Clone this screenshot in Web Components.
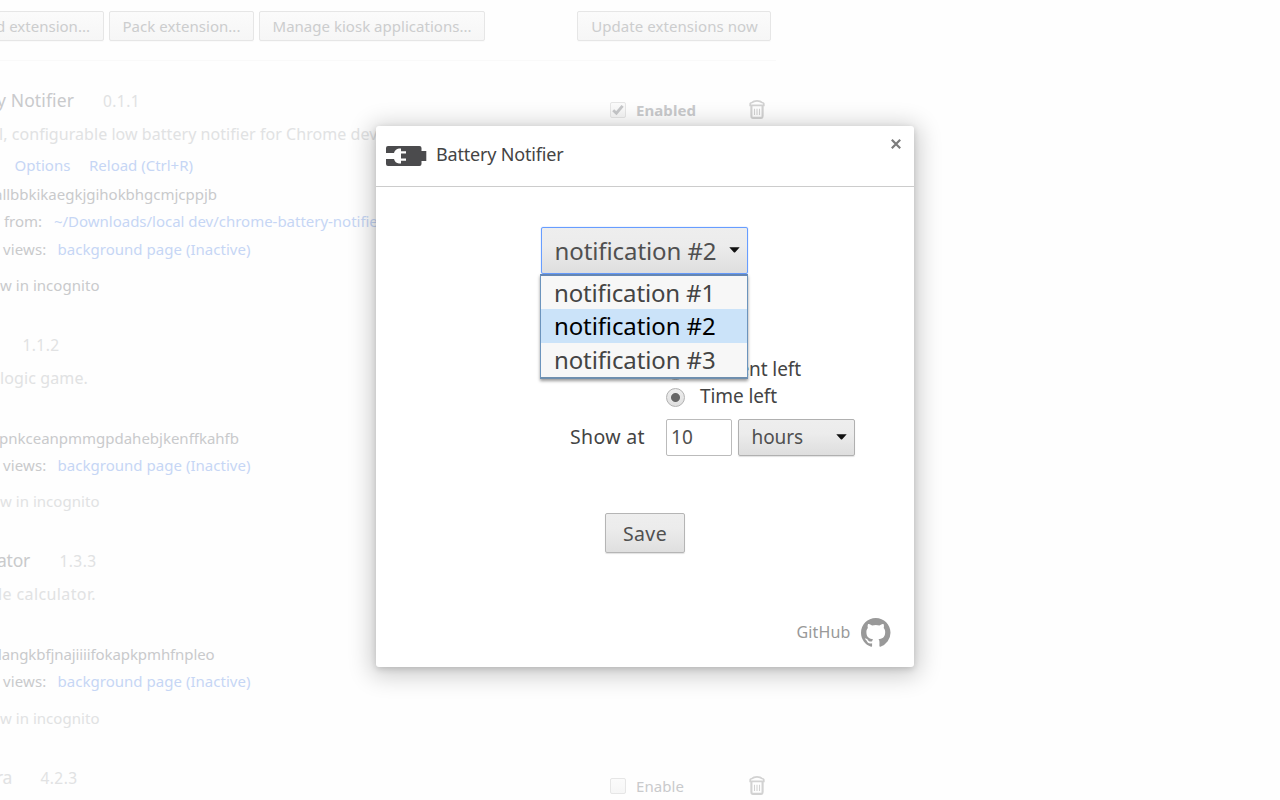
<!DOCTYPE html>
<html lang="en">
<head>
<meta charset="utf-8">
<title>Battery Notifier</title>
<style>
html,body{margin:0;width:1280px;height:800px;overflow:hidden;background:#fefefe;font-family:"Noto Sans","Open Sans",sans-serif}
</style>
</head>
<body>
<extensions-page></extensions-page>
<options-dialog></options-dialog>
<script>
const define = (name, html, setup) => customElements.define(name, class extends HTMLElement {
  connectedCallback() {
    if (this.shadowRoot) return;
    const t = document.createElement('template');
    t.innerHTML = html;
    this.attachShadow({mode: 'open'}).append(t.content.cloneNode(true));
    if (setup) setup(this);
  }
});

/* A single run of text, tracked so that it fills the width in its w attribute. */
define('fit-text', `<style>
:host{display:block;flex:none;white-space:nowrap;line-height:26px;font-size:15px}
span{display:inline-block}
</style><span><slot></slot></span>`, el => {
  const s = el.getAttribute('s'), x = el.getAttribute('x');
  if (s) el.style.fontSize = s + 'px';
  if (x) el.style.marginLeft = x + 'px';
  const w = +el.getAttribute('w');
  if (w) {
    const span = el.shadowRoot.querySelector('span');
    const n = el.textContent.length;
    el.style.letterSpacing = ((w - span.getBoundingClientRect().width) / n).toFixed(3) + 'px';
    el.style.width = w + 'px';
  }
});

define('text-row', `<style>
:host{display:flex;align-items:baseline;height:26px;line-height:26px;color:#c9cacc}
:host::before{content:"\\200b";font-size:17px;width:0;flex:none}
</style><slot></slot>`, el => { el.style.marginTop = (el.getAttribute('gap') || 0) + 'px'; });

define('tool-button', `<style>
:host{display:flex;box-sizing:border-box;justify-content:center;align-items:center;height:30px;border:1px solid #e6e6e6;border-radius:2px;background:linear-gradient(#fbfbfb,#f6f6f6);color:#cccdce;box-shadow:0 1px 0 #fafafa;flex:none}
</style><slot></slot>`);

define('check-box', `<style>
:host{display:block;width:14px;height:14px;border:1px solid #e6e6e6;border-radius:2px;background:linear-gradient(#fbfbfb,#f6f6f6);flex:none}
svg{display:none;width:14px;height:14px}
:host([checked]) svg{display:block}
</style><svg viewBox="0 0 14 14"><path d="M2.2 7.2 5.4 10.2 11.6 2.9" fill="none" stroke="#c6c7c9" stroke-width="2.9"/></svg>`);

define('trash-icon', `<style>:host{display:block;width:16px;height:19px;flex:none}svg{display:block}</style>
<svg width="16" height="19" viewBox="0 0 16 19" fill="none" stroke="#d2d2d2"><path d="M1.2 5.4V3.6Q1.2 2.8 3 2.5L5 1.4Q8 .5 11 1.4L13 2.5Q14.8 2.8 14.8 3.6V5.4Z" stroke-width="1.7"/><path d="M2.4 6V16Q2.4 17.9 4 17.9H12Q13.6 17.9 13.6 16V6" stroke-width="2.1"/><path d="M5.5 8.8V15M8 8.8V15M10.5 8.8V15" stroke-width="1.1"/></svg>`);

define('extension-item', `<style>
:host{display:flex;align-items:flex-start}
main{width:610px;flex:none}
aside{display:flex;align-items:center;padding-top:10px;color:#c9cacc}
</style><main><slot></slot></main><aside><slot name="controls"></slot></aside>`, el => {
  el.style.height = el.getAttribute('h') + 'px';
});

define('extensions-page', `<style>
:host{display:block;width:1280px;height:800px;overflow:hidden}
nav{display:flex;width:776px;height:61px;margin-bottom:-1px;box-sizing:border-box;border-bottom:1px solid #f9f9f9;padding-top:11px}
.l{color:#c6d6f5}.v{color:#e1e2e3}
.ctl{display:flex;align-items:center;height:26px}
trash-icon{margin-top:-2px}
</style>
<nav>
<tool-button style="width:106px;margin-left:-2px;justify-content:flex-start"><fit-text x="-3" w="94">d extension...</fit-text></tool-button>
<tool-button style="width:145px;margin-left:5px"><fit-text w="118">Pack extension...</fit-text></tool-button>
<tool-button style="width:226px;margin-left:5px"><fit-text w="199">Manage kiosk applications...</fit-text></tool-button>
<tool-button style="width:194px;margin-left:92px"><fit-text x="1" w="166.5">Update extensions now</fit-text></tool-button>
</nav>
<extension-item h="244">
 <text-row gap="27"><fit-text s="17.5" x="-3" w="77">y Notifier</fit-text><fit-text class="v" s="15.5" x="29" w="37">0.1.1</fit-text></text-row>
 <text-row gap="8"><fit-text class="v" s="16" x="-1" w="411.5">l, configurable low battery notifier for Chrome devices.</fit-text></text-row>
 <text-row gap="5"><fit-text class="l" x="14.5" w="56">Options</fit-text><fit-text class="l" x="18.5" w="104">Reload (Ctrl+R)</fit-text></text-row>
 <text-row gap="3"><fit-text x="-6" w="223">allbbkikaegkjgihokbhgcmjcppjb</fit-text></text-row>
 <text-row gap="1"><fit-text x="4" w="38">from:</fit-text><fit-text class="l" x="12" w="330">~/Downloads/local dev/chrome-battery-notifier</fit-text></text-row>
 <text-row gap="2"><fit-text x="3" w="43.5">views:</fit-text><fit-text class="l" x="11" w="193">background page (Inactive)</fit-text></text-row>
 <text-row gap="10"><fit-text x="0" w="99.5">w in incognito</fit-text></text-row>
 <div slot="controls" class="ctl" style="margin-top:27px"><check-box checked></check-box><fit-text x="10" w="60" style="font-weight:bold">Enabled</fit-text><trash-icon style="margin-left:53px"></trash-icon></div>
</extension-item>
<extension-item h="216">
 <text-row gap="28"><fit-text class="v" s="15.5" x="22.5" w="37">1.1.2</fit-text></text-row>
 <text-row gap="7"><fit-text class="v" s="16" x="0" w="88">logic game.</fit-text></text-row>
 <text-row gap="34"><fit-text x="-1" w="240">pnkceanpmmgpdahebjkenffkahfb</fit-text></text-row>
 <text-row gap="1"><fit-text x="3" w="43.5">views:</fit-text><fit-text class="l" x="11" w="193">background page (Inactive)</fit-text></text-row>
 <text-row gap="10"><fit-text class="v" x="0" w="99.5">w in incognito</fit-text></text-row>
</extension-item>
<extension-item h="217">
 <text-row gap="27"><fit-text s="17.5" x="-3" w="33">ator</fit-text><fit-text class="v" s="15.5" x="29.5" w="37">1.3.3</fit-text></text-row>
 <text-row gap="8"><fit-text class="v" s="16" x="-2" w="98">le calculator.</fit-text></text-row>
 <text-row gap="34"><fit-text x="-2" w="216.5">langkbfjnajiiiifokapkpmhfnpleo</fit-text></text-row>
 <text-row gap="1"><fit-text x="3" w="43.5">views:</fit-text><fit-text class="l" x="11" w="193">background page (Inactive)</fit-text></text-row>
 <text-row gap="11"><fit-text class="v" x="0" w="99.5">w in incognito</fit-text></text-row>
</extension-item>
<extension-item h="63">
 <text-row gap="27"><fit-text class="v" s="17.5" x="-4" w="16">ra</fit-text><fit-text class="v" s="15.5" x="28.5" w="37">4.2.3</fit-text></text-row>
 <div slot="controls" class="ctl" style="margin-top:26px"><check-box></check-box><fit-text x="10" w="48">Enable</fit-text><trash-icon style="margin-left:65px"></trash-icon></div>
</extension-item>`);

define('drop-button', `<style>
:host{display:flex;align-items:center;box-sizing:border-box;border:1px solid #b0b0b0;border-radius:2px;background:linear-gradient(#eee,#ececec 38%,#dedede);box-shadow:0 1px 1px rgba(0,0,0,.12);color:#505050;padding:0 7px 0 12.5px;justify-content:space-between}
:host([focused]){border-color:#679dff;box-shadow:0 0 1px #679dff}
svg{display:block;flex:none;margin-top:-1px}
</style><slot></slot><svg width="11" height="6" viewBox="0 0 11 6"><path d="M.3.3H10.7L6.2 5.2Q5.5 6 4.8 5.2Z" fill="#111"/></svg>`);

define('option-menu', `<style>
:host{display:block;position:absolute;z-index:2;box-sizing:border-box;width:208px;height:105px;left:-1px;top:47px;background:#f7f7f7;border:1px solid #6c94bd;border-top:2px solid #6586b3;border-bottom:2px solid #6f8fae;box-shadow:0 2px 3px rgba(0,0,0,.4);color:#444}
div{height:34px;padding-left:13px;display:flex;align-items:center}
style+div{height:33px}
.on{background:#cbe3f9;color:#000}
</style><div><fit-text s="24" w="161">notification #1</fit-text></div><div class="on"><fit-text s="24" w="161.5">notification #2</fit-text></div><div><fit-text s="24" w="161.5">notification #3</fit-text></div>`);

define('radio-dot', `<style>
:host{display:block;box-sizing:border-box;width:19px;height:19px;border-radius:50%;border:1px solid #b2b2b2;background:radial-gradient(circle,#666 0 4px,transparent 5px),linear-gradient(#eee,#dfdfdf);flex:none;margin-top:2px}
:host([off]){background:linear-gradient(#eee,#dfdfdf)}
</style>`);

define('options-dialog', `<style>
:host{display:block;position:absolute;left:376px;top:126px;width:538px;height:541px;background:#fff;border-radius:3px;box-shadow:0 4px 23px 5px rgba(0,0,0,.2),0 2px 6px rgba(0,0,0,.15);color:#444}
header{display:flex;height:60px;border-bottom:1px solid #ccc;padding-left:10px}
header svg,footer svg{display:block;flex:none}
.batt{margin-top:20px}
.x{margin:12.5px 13px 0 auto}
.pick{position:relative;width:207px;height:47px;margin:40px 0 0 165px}
.pick drop-button{height:47px}
.row{display:flex;align-items:center;height:27px;padding-left:290px}
.row fit-text{margin:-1px 0 0 15px}
.at{display:flex;align-items:center;height:37px;margin-top:9px;padding-left:194px}
.at fit-text{margin-top:-2px}
.num{box-sizing:border-box;width:66px;height:37px;border:1px solid #bbb;border-radius:2px;margin-left:21px;padding-left:4px;display:flex;align-items:center;color:#505050}
.save{display:flex;align-items:center;justify-content:center;box-sizing:border-box;width:80px;height:40px;margin:57px 0 0 229px;border:1px solid #b5b5b5;border-radius:2px;background:linear-gradient(#eee,#ececec 38%,#dfdfdf);box-shadow:0 1px 1px rgba(0,0,0,.12);color:#505050;padding-top:1px}
footer{display:flex;align-items:center;height:30px;margin-top:65px;padding-left:420.5px;color:#999}
</style>
<header>
<svg class="batt" width="41" height="20" viewBox="0 0 41 20"><path d="M2 0H33.5Q35.5 0 35.5 2V5H40.3V15H35.5V18Q35.5 20 33.5 20H2Q0 20 0 18V13H8Q9 17 13 17.5H15V14.8H20V12.4H15V7.6H20V5.2H15V2.5H13Q9 3 8 7H0V2Q0 0 2 0Z" fill="#4b4b4d"/></svg>
<fit-text s="18" x="9" w="127.5" style="margin-top:15px">Battery Notifier</fit-text>
<svg class="x" width="10" height="10" viewBox="0 0 10 10"><path d="M.8.8 9.2 9.2M9.2.8.8 9.2" stroke="#7c7c7c" stroke-width="2.2"/></svg>
</header>
<div class="pick"><drop-button focused><fit-text s="24" w="162">notification #2</fit-text></drop-button><option-menu></option-menu></div>
<div class="row" style="margin-top:82px"><radio-dot off></radio-dot><fit-text s="19" w="101">Percent left</fit-text></div>
<div class="row"><radio-dot></radio-dot><fit-text s="19" w="77">Time left</fit-text></div>
<div class="at"><fit-text s="19.5" w="75">Show at</fit-text><div class="num"><fit-text s="19" w="22">10</fit-text></div><drop-button style="width:117px;height:37px;margin-left:6px"><fit-text s="19" w="51.5">hours</fit-text></drop-button></div>
<div class="save"><fit-text s="19.5" w="44">Save</fit-text></div>
<footer><fit-text s="16" w="54" style="margin-top:-2px">GitHub</fit-text><svg style="margin-left:10.5px" width="29.5" height="29.5" viewBox="0 0 16 16"><path fill="#999" d="M8 0C3.58 0 0 3.58 0 8c0 3.54 2.29 6.53 5.47 7.59.4.07.55-.17.55-.38 0-.19-.01-.82-.01-1.49-2.01.37-2.53-.49-2.69-.94-.09-.23-.48-.94-.82-1.13-.28-.15-.68-.52-.01-.53.63-.01 1.08.58 1.23.82.72 1.21 1.87.87 2.33.66.07-.52.28-.87.51-1.07-1.78-.2-3.64-.89-3.64-3.95 0-.87.31-1.59.82-2.15-.08-.2-.36-1.02.08-2.12 0 0 .67-.21 2.2.82.64-.18 1.32-.27 2-.27s1.36.09 2 .27c1.53-1.04 2.2-.82 2.2-.82.44 1.1.16 1.92.08 2.12.51.56.82 1.27.82 2.15 0 3.07-1.87 3.75-3.65 3.95.29.25.54.73.54 1.48 0 1.07-.01 1.93-.01 2.2 0 .21.15.46.55.38A8.01 8.01 0 0 0 16 8c0-4.42-3.58-8-8-8Z"/></svg></footer>`);
</script>
</body>
</html>
